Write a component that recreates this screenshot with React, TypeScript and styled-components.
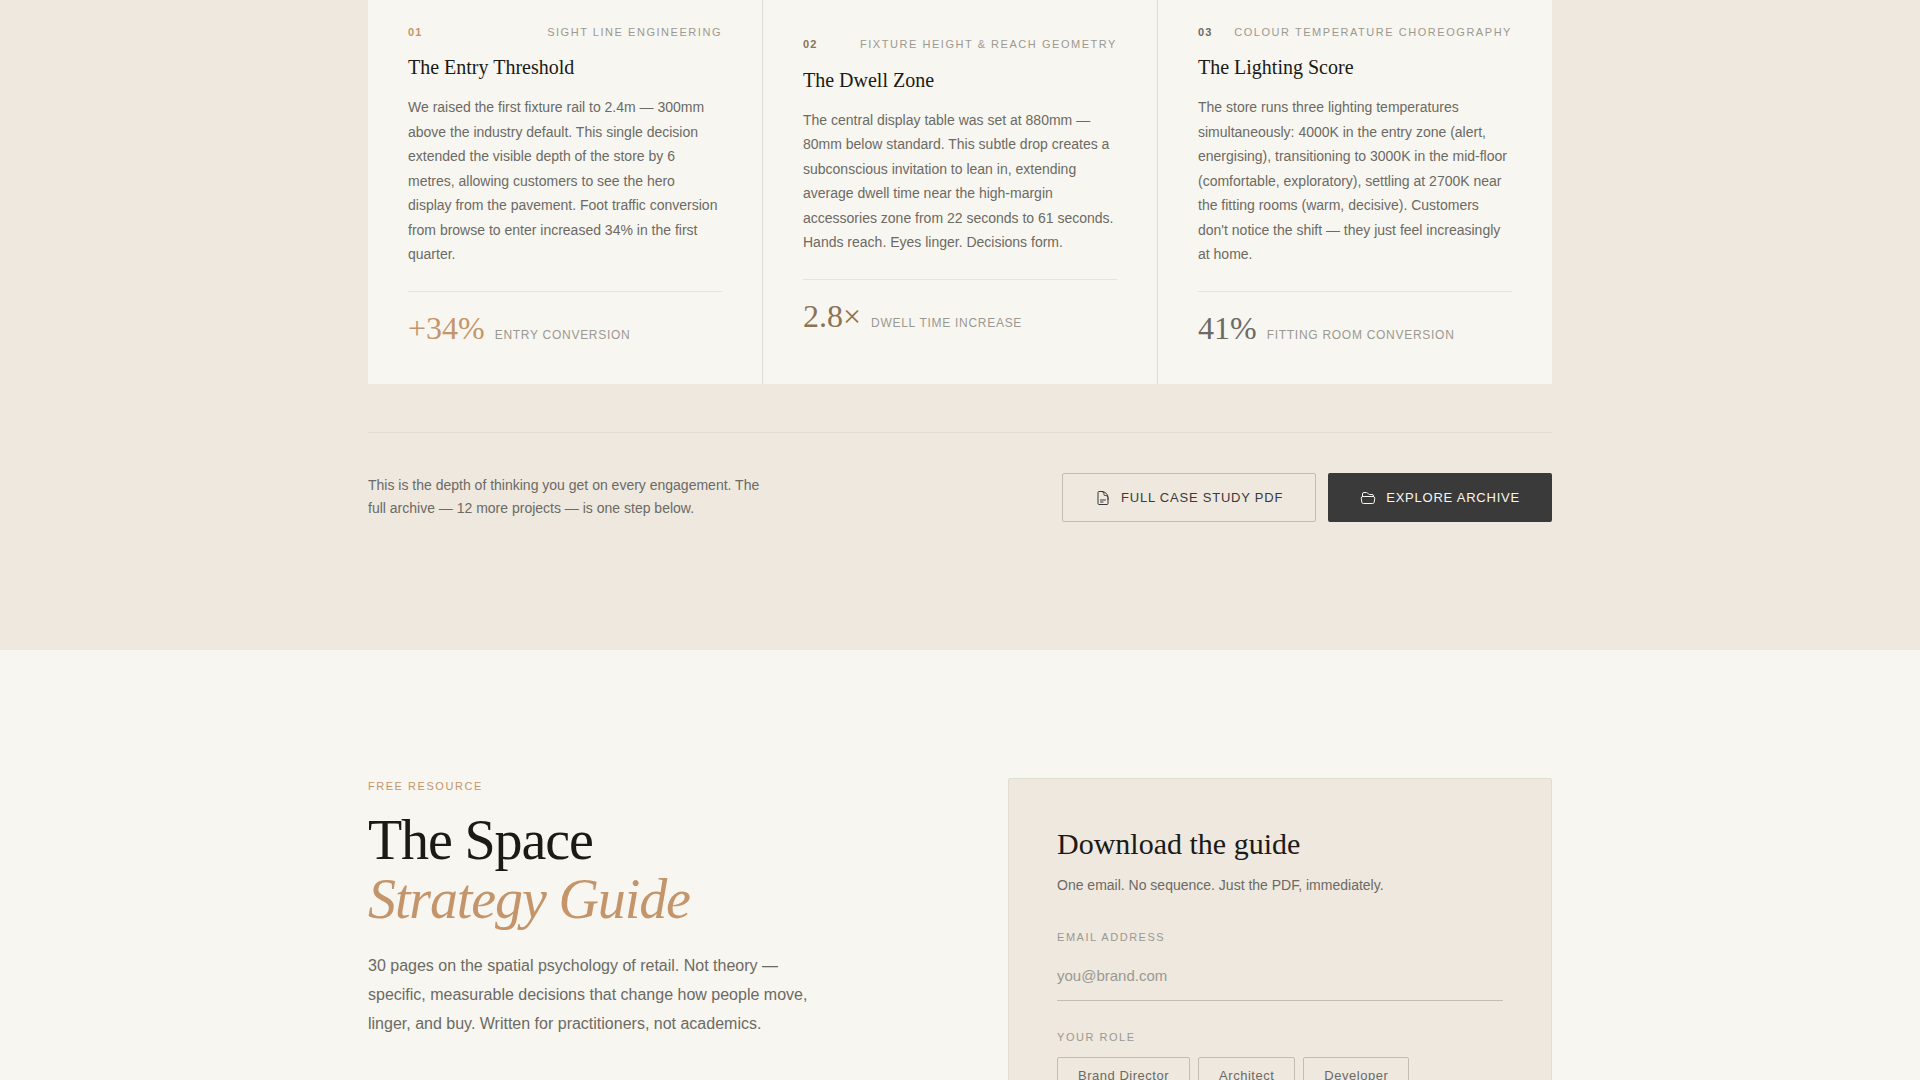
import React from 'react';
import styled, { createGlobalStyle } from 'styled-components';
import { HiOutlineDocumentText, HiOutlineFolderOpen } from 'react-icons/hi2';

const sans = '"Liberation Sans", Arial, sans-serif';
const serif = '"Liberation Serif", "Times New Roman", serif';

const color = {
  cream: '#f8f6f0',
  sand: '#eee8df',
  line: '#dddcd2',
  lineFaint: '#e0ded3',
  lineSoft: '#e6e4dc',
  lineStrong: '#c0beb0',
  ink: '#1a1a16',
  charcoal: '#3a3a3a',
  body: '#6b6a64',
  muted: '#9a9992',
  clay: '#c4956a',
  umber: '#8b7355',
};

const GlobalStyle = createGlobalStyle`
  *, *::before, *::after { box-sizing: border-box; }
  body { margin: 0; background: ${color.cream}; font-family: ${sans}; color: ${color.ink}; }
  h1, h2, h3, p { margin: 0; font-weight: 400; }
`;

const Page = styled.main`
  height: 100vh;
  overflow: hidden;
`;

const Container = styled.div`
  max-width: 1280px;
  margin: 0 auto;
  padding: 0 48px;
`;

const CaseSection = styled.section`
  background: ${color.sand};
  padding-bottom: 128px;
`;

const ZoneGrid = styled.div`
  display: grid;
  grid-template-columns: repeat(3, 1fr);
  gap: 1px;
  background: ${color.line};
`;

const ZoneCard = styled.article`
  display: flex;
  flex-direction: column;
  justify-content: center;
  background: ${color.cream};
  padding: 25px 40px 40px;
`;

const ZoneHeader = styled.header`
  display: flex;
  justify-content: space-between;
  font-size: 11px;
  line-height: 1.4;
  margin-bottom: 15px;
`;

const ZoneNumber = styled.span<{ $tone: string }>`
  font-weight: 700;
  letter-spacing: 0.1em;
  color: ${(p) => p.$tone};
`;

const ZoneTag = styled.span`
  letter-spacing: 0.14em;
  text-transform: uppercase;
  color: ${color.muted};
`;

const ZoneTitle = styled.h3`
  font-family: ${serif};
  font-size: 20px;
  line-height: 24px;
  margin-bottom: 16px;
`;

const ZoneText = styled.p`
  font-size: 14px;
  line-height: 1.75;
  color: ${color.body};
`;

const Stat = styled.div`
  display: flex;
  align-items: baseline;
  gap: 10px;
  margin-top: 24px;
  padding-top: 20px;
  border-top: 1px solid ${color.lineSoft};
`;

const StatValue = styled.span<{ $tone: string }>`
  font-family: ${serif};
  font-size: 32px;
  line-height: 32px;
  color: ${(p) => p.$tone};
`;

const StatLabel = styled.span`
  font-size: 12px;
  line-height: 16px;
  letter-spacing: 0.06em;
  text-transform: uppercase;
  color: ${color.muted};
`;

const CaseFooter = styled.div`
  display: flex;
  align-items: center;
  justify-content: space-between;
  margin-top: 48px;
  padding-top: 40px;
  border-top: 1px solid ${color.lineFaint};
`;

const FooterText = styled.p`
  max-width: 400px;
  font-size: 14px;
  line-height: 1.7;
  color: ${color.body};
`;

const Actions = styled.div`
  display: flex;
  gap: 12px;
`;

const ActionButton = styled.button<{ $solid?: boolean }>`
  display: inline-flex;
  align-items: center;
  gap: 10px;
  padding: 16px 32px 15px;
  border: ${(p) => (p.$solid ? 'none' : `1px solid ${color.lineStrong}`)};
  border-radius: 2px;
  background: ${(p) => (p.$solid ? color.charcoal : 'transparent')};
  color: ${(p) => (p.$solid ? color.cream : color.charcoal)};
  font-family: ${sans};
  font-size: 13px;
  line-height: 15px;
  letter-spacing: 0.06em;
  text-transform: uppercase;
  cursor: pointer;

  svg {
    width: 16px;
    height: 16px;
  }
`;

const GuideSection = styled.section`
  padding: 128px 0;
`;

const GuideGrid = styled.div`
  display: grid;
  grid-template-columns: 1fr 1fr;
  gap: 96px;
  align-items: start;
`;

const Eyebrow = styled.p`
  font-size: 11px;
  line-height: 1.6;
  letter-spacing: 0.14em;
  text-transform: uppercase;
  color: ${color.clay};
  margin-bottom: 16px;
`;

const GuideTitle = styled.h1`
  font-family: ${serif};
  font-size: 56px;
  line-height: 1.05;
  letter-spacing: -0.02em;
  margin-bottom: 23px;

  em {
    display: block;
    color: ${color.clay};
  }
`;

const GuideText = styled.p`
  max-width: 448px;
  font-size: 16px;
  line-height: 1.8;
  color: ${color.body};
`;

const FormCard = styled.form`
  padding: 48px;
  background: ${color.sand};
  border: 1px solid ${color.lineFaint};
  border-radius: 2px;
`;

const FormTitle = styled.h2`
  font-family: ${serif};
  font-size: 30px;
  line-height: 34px;
  margin-bottom: 12px;
`;

const FormNote = styled.p`
  font-size: 14px;
  line-height: 24px;
  color: ${color.body};
  margin-bottom: 32px;
`;

const FieldLabel = styled.label`
  display: block;
  font-size: 11px;
  line-height: 16px;
  letter-spacing: 0.14em;
  text-transform: uppercase;
  color: ${color.muted};
`;

const EmailInput = styled.input`
  display: block;
  width: 100%;
  margin: 8px 0 28px;
  padding: 14px 0 16px;
  border: 0;
  border-bottom: 1px solid ${color.lineStrong};
  border-radius: 0;
  background: transparent;
  font-family: ${sans};
  font-size: 15px;
  line-height: 17px;
  color: ${color.ink};
  outline: none;

  &::placeholder {
    color: ${color.muted};
    opacity: 1;
  }
`;

const RoleGroup = styled.div`
  display: flex;
  flex-wrap: wrap;
  gap: 8px;
  margin-top: 12px;
`;

const RoleButton = styled.button`
  padding: 10px 20px;
  border: 1px solid ${color.lineStrong};
  border-radius: 2px;
  background: transparent;
  font-family: ${sans};
  font-size: 13px;
  line-height: 15px;
  letter-spacing: 0.04em;
  color: ${color.body};
  cursor: pointer;
`;

const zones = [
  {
    number: '01',
    tag: 'Sight Line Engineering',
    title: 'The Entry Threshold',
    text: 'We raised the first fixture rail to 2.4m — 300mm above the industry default. This single decision extended the visible depth of the store by 6 metres, allowing customers to see the hero display from the pavement. Foot traffic conversion from browse to enter increased 34% in the first quarter.',
    value: '+34%',
    label: 'Entry conversion',
    tone: color.clay,
  },
  {
    number: '02',
    tag: 'Fixture Height & Reach Geometry',
    title: 'The Dwell Zone',
    text: 'The central display table was set at 880mm — 80mm below standard. This subtle drop creates a subconscious invitation to lean in, extending average dwell time near the high-margin accessories zone from 22 seconds to 61 seconds. Hands reach. Eyes linger. Decisions form.',
    value: '2.8×',
    label: 'Dwell time increase',
    tone: color.umber,
  },
  {
    number: '03',
    tag: 'Colour Temperature Choreography',
    title: 'The Lighting Score',
    text: "The store runs three lighting temperatures simultaneously: 4000K in the entry zone (alert, energising), transitioning to 3000K in the mid-floor (comfortable, exploratory), settling at 2700K near the fitting rooms (warm, decisive). Customers don't notice the shift — they just feel increasingly at home.",
    value: '41%',
    label: 'Fitting room conversion',
    tone: color.body,
  },
];

const roles = ['Brand Director', 'Architect', 'Developer'];

export default function App() {
  return (
    <>
      <GlobalStyle />
      <Page>
        <CaseSection>
          <Container>
            <ZoneGrid>
              {zones.map((zone) => (
                <ZoneCard key={zone.number}>
                  <ZoneHeader>
                    <ZoneNumber $tone={zone.tone}>{zone.number}</ZoneNumber>
                    <ZoneTag>{zone.tag}</ZoneTag>
                  </ZoneHeader>
                  <ZoneTitle>{zone.title}</ZoneTitle>
                  <ZoneText>{zone.text}</ZoneText>
                  <Stat>
                    <StatValue $tone={zone.tone}>{zone.value}</StatValue>
                    <StatLabel>{zone.label}</StatLabel>
                  </Stat>
                </ZoneCard>
              ))}
            </ZoneGrid>
            <CaseFooter>
              <FooterText>
                This is the depth of thinking you get on every engagement. The full archive — 12 more
                projects — is one step below.
              </FooterText>
              <Actions>
                <ActionButton type="button">
                  <HiOutlineDocumentText aria-hidden />
                  Full case study PDF
                </ActionButton>
                <ActionButton type="button" $solid>
                  <HiOutlineFolderOpen aria-hidden />
                  Explore archive
                </ActionButton>
              </Actions>
            </CaseFooter>
          </Container>
        </CaseSection>

        <GuideSection>
          <Container>
            <GuideGrid>
              <div>
                <Eyebrow>Free resource</Eyebrow>
                <GuideTitle>
                  The Space <em>Strategy Guide</em>
                </GuideTitle>
                <GuideText>
                  30 pages on the spatial psychology of retail. Not theory — specific, measurable
                  decisions that change how people move, linger, and buy. Written for practitioners,
                  not academics.
                </GuideText>
              </div>
              <FormCard onSubmit={(e) => e.preventDefault()}>
                <FormTitle>Download the guide</FormTitle>
                <FormNote>One email. No sequence. Just the PDF, immediately.</FormNote>
                <FieldLabel htmlFor="email">Email address</FieldLabel>
                <EmailInput id="email" type="email" placeholder="you@brand.com" />
                <FieldLabel as="span" id="role-label">
                  Your role
                </FieldLabel>
                <RoleGroup role="group" aria-labelledby="role-label">
                  {roles.map((role) => (
                    <RoleButton key={role} type="button">
                      {role}
                    </RoleButton>
                  ))}
                </RoleGroup>
              </FormCard>
            </GuideGrid>
          </Container>
        </GuideSection>
      </Page>
    </>
  );
}
